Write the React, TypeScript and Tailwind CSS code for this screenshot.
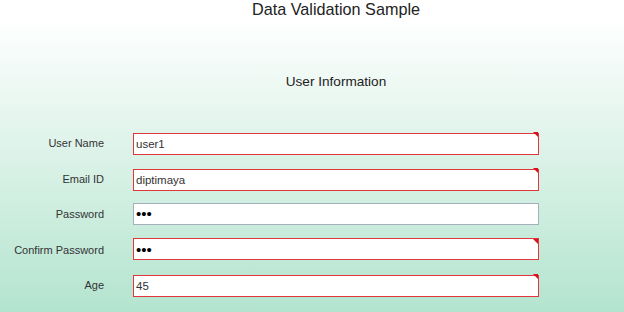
import React from 'react';

type Field = {
  label: string;
  value: string;
  type?: string;
  invalid: boolean;
};

const fields: Field[] = [
  { label: 'User Name', value: 'user1', invalid: true },
  { label: 'Email ID', value: 'diptimaya', invalid: true },
  { label: 'Password', value: 'abc', type: 'password', invalid: false },
  { label: 'Confirm Password', value: 'abc', type: 'password', invalid: true },
  { label: 'Age', value: '45', invalid: true },
];

const FieldRow = function({ field }: { field: Field }) {
  return (
    <div className='flex items-center'>
      <label className='w-[104px] pt-[2px] text-right text-[11px] leading-[14px] text-[#333]'>{field.label}</label>
      <div className='relative ml-[29px] w-[406px] h-[22px]'>
        <input
          readOnly
          type={field.type || 'text'}
          value={field.value}
          className={`w-full h-full bg-white pl-[2px] outline-none text-[#333] ${field.type === 'password' ? 'text-[15px] text-black' : 'text-[11.5px]'} ${field.invalid ? 'border border-[#e1363c]' : 'border border-[#a5b0bc]'}`}
        />
        {/* red corner flag for fields that failed validation */}
        {field.invalid && (
          <div className='absolute top-[1px] right-[1px] w-0 h-0 border-t-[5px] border-l-[5px] border-t-[#d8121c] border-l-transparent' />
        )}
      </div>
    </div>
  );
};

const App = function() {
  return (
    <div
      className='w-[624px] h-[312px] overflow-hidden bg-linear-to-b from-white from-[5%] to-[#b3e4cf]'
      style={{ fontFamily: '"Liberation Sans", Arial, sans-serif' }}
    >
      <h1 className='pl-[48px] text-center text-[16.2px] leading-[18px] h-[18px] text-[#222]'>Data Validation Sample</h1>
      <h2 className='mt-[56px] pl-[48px] text-center text-[13.6px] leading-[16px] text-[#222]'>User Information</h2>
      <div className='mt-[41px] flex flex-col gap-[13.5px]'>
        {fields.map((f) => <FieldRow key={f.label} field={f} />)}
      </div>
    </div>
  );
};

export default App;
